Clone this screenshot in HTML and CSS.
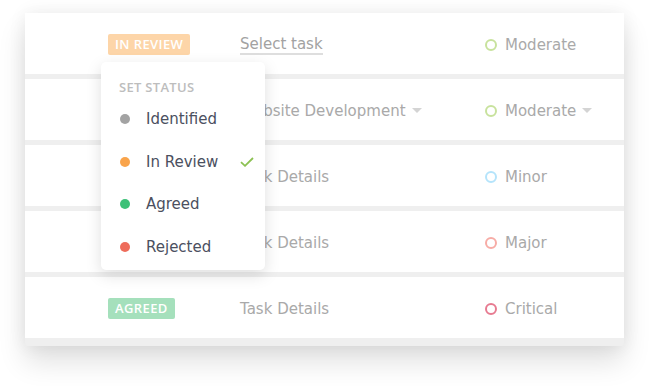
FILE: index.html
```html
<!DOCTYPE html>
<html lang="en">
<head>
    <meta charset="UTF-8">
    <meta name="viewport" content="width=device-width, initial-scale=1.0">
    <title>Task Status</title>
    <link rel="stylesheet" href="styles.css">
</head>
<body>
    <div class="board">
        <div class="row">
            <span></span>
            <div class="cell"><span class="badge review">IN REVIEW</span></div>
            <div class="cell"><a href="#" class="task-link">Select task</a></div>
            <div class="cell severity"><span class="ring moderate"></span>Moderate</div>
        </div>
        <div class="row">
            <span></span>
            <div class="cell"></div>
            <div class="cell task">Website Development <span class="caret"></span></div>
            <div class="cell severity"><span class="ring moderate"></span>Moderate <span class="caret"></span></div>
        </div>
        <div class="row">
            <span></span>
            <div class="cell"></div>
            <div class="cell task">Task Details</div>
            <div class="cell severity"><span class="ring minor"></span>Minor</div>
        </div>
        <div class="row">
            <span></span>
            <div class="cell"></div>
            <div class="cell task">Task Details</div>
            <div class="cell severity"><span class="ring major"></span>Major</div>
        </div>
        <div class="row">
            <span></span>
            <div class="cell"><span class="badge agreed">AGREED</span></div>
            <div class="cell task">Task Details</div>
            <div class="cell severity"><span class="ring critical"></span>Critical</div>
        </div>

        <div class="status-menu">
            <div class="menu-title">SET STATUS</div>
            <div class="menu-item"><span class="dot identified"></span>Identified</div>
            <div class="menu-item"><span class="dot in-review"></span>In Review
                <svg class="check" width="14" height="10" viewBox="0 0 14 10">
                    <path d="M1 5.2 L5 8.8 L13 1" fill="none" stroke="#8cc152" stroke-width="1.8"/>
                </svg>
            </div>
            <div class="menu-item"><span class="dot agreed-dot"></span>Agreed</div>
            <div class="menu-item"><span class="dot rejected"></span>Rejected</div>
        </div>
    </div>
</body>
</html>
```

FILE: styles.css
```css
html, body {
    height: 100%;
}

body {
    margin: 0;
    padding: 13px 26px 40px 25px;
    box-sizing: border-box;
    background: #fff;
    font-family: "DejaVu Sans", Arial, sans-serif;
}

.board {
    position: relative;
    width: 599px;
    display: flex;
    flex-direction: column;
    gap: 5px;
    padding-bottom: 8px;
    background: #efefef;
    border-radius: 3px;
    box-shadow: 0 16px 28px rgba(0, 0, 0, 0.12), 0 0 18px rgba(0, 0, 0, 0.07);
}

.row {
    height: 61px;
    background: #fff;
    display: grid;
    grid-template-columns: 83px 132px 245px 1fr;
    align-items: center;
}

.cell {
    display: flex;
    align-items: center;
    font-size: 15px;
    color: #a9a9a9;
    padding-top: 2px;
}

.badge {
    display: inline-block;
    padding: 0 7px;
    height: 21px;
    line-height: 21px;
    border-radius: 2px;
    font-family: "Open Sans", "DejaVu Sans", sans-serif;
    font-size: 13px;
    font-weight: 600;
    letter-spacing: 0.4px;
    color: #fff;
}

.badge.review {
    background: #fdd5a8;
}

.badge.agreed {
    background: #a5e0bc;
}

.task-link {
    color: #a2a2a2;
    text-decoration: none;
    border-bottom: 2px solid #dedede;
    line-height: 18px;
}

.caret {
    display: inline-block;
    margin-left: 6px;
    width: 0;
    height: 0;
    border-left: 5px solid transparent;
    border-right: 5px solid transparent;
    border-top: 5px solid #d4d4d4;
}

.ring {
    width: 8px;
    height: 8px;
    border-radius: 50%;
    border: 2px solid;
    margin-right: 8px;
}

.ring.moderate { border-color: #c8e29d; }
.ring.minor { border-color: #b5e4fb; }
.ring.major { border-color: #f7aca6; }
.ring.critical { border-color: #e77b91; }

.status-menu {
    position: absolute;
    left: 76px;
    top: 49px;
    width: 164px;
    height: 208px;
    box-sizing: border-box;
    padding: 17px 0 0 18px;
    background: #fff;
    border-radius: 5px;
    box-shadow: 0 5px 16px rgba(0, 0, 0, 0.13);
}

.menu-title {
    font-family: "Open Sans", "DejaVu Sans", sans-serif;
    font-size: 13px;
    font-weight: 600;
    letter-spacing: 0.3px;
    color: #bdbdbd;
    height: 16px;
    line-height: 16px;
    margin-bottom: 3px;
}

.menu-item {
    position: relative;
    display: flex;
    align-items: center;
    height: 42.5px;
    font-size: 15px;
    color: #4b5060;
}

.dot {
    width: 10px;
    height: 10px;
    border-radius: 50%;
    margin: 0 16px 0 1px;
}

.dot.identified { background: #a3a3a3; }
.dot.in-review { background: #f9a44b; }
.dot.agreed-dot { background: #3dc178; }
.dot.rejected { background: #ee6c5b; }

.check {
    position: absolute;
    left: 121px;
    top: 16px;
}
```
